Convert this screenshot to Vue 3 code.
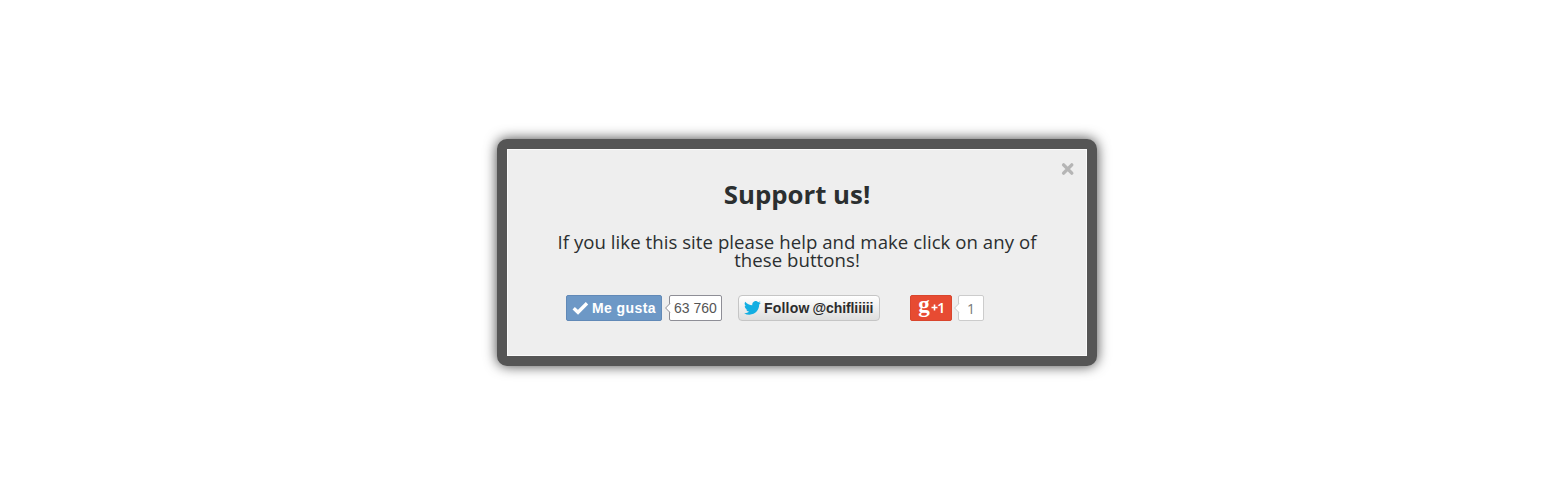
<script setup>
const heading = 'Support us!'
const lines = ['If you like this site please help and make click on any of', 'these buttons!']
const handle = '@chifl' + 'i'.repeat(5)
</script>

<template>
  <main class="page">
    <section class="dialog">
      <button class="close" aria-label="Close">
        <svg width="14" height="14" viewBox="0 0 14 14"><path d="M2.6 2.9 10.8 11.1M10.8 2.9 2.6 11.1" /></svg>
      </button>
      <h1>{{ heading }}</h1>
      <p><span v-for="line in lines" :key="line">{{ line }}</span></p>
      <div class="buttons">
        <button class="like">
          <svg width="17" height="14" viewBox="0 0 17 14"><path d="M1.7 7.3 6 11.3 15 2.2" /></svg>
          <span>Me gusta</span>
        </button>
        <div class="count like-count">
          <svg class="tip" width="5" height="10" viewBox="0 0 5 10"><path d="M5 .5.6 5 5 9.5" /></svg>
          <span>63 760</span>
        </div>
        <button class="follow">
          <svg width="17" height="14" viewBox="0 0 24 20"><path d="M23.95 2.37a9.8 9.8 0 0 1-2.82.77A4.93 4.93 0 0 0 23.3.42a9.9 9.9 0 0 1-3.13 1.2 4.92 4.92 0 0 0-8.39 4.48A13.97 13.97 0 0 1 1.64.96a4.92 4.92 0 0 0 1.52 6.57 4.9 4.9 0 0 1-2.23-.62v.06a4.92 4.92 0 0 0 3.95 4.83 5 5 0 0 1-2.22.08 4.93 4.93 0 0 0 4.6 3.42A9.87 9.87 0 0 1 0 17.34a13.94 13.94 0 0 0 7.55 2.21c9.14 0 14.31-7.72 13.99-14.64a10 10 0 0 0 2.41-2.54Z" /></svg>
          <span>Follow</span><span class="handle">{{ handle }}</span>
        </button>
        <button class="plus">
          <span class="g">g</span>
          <svg width="7" height="7" viewBox="0 0 7 7"><path d="M3.5 .5V6.5M.5 3.5H6.5" /></svg>
          <span class="one">1</span>
        </button>
        <div class="count plus-count">
          <svg class="tip" width="5" height="10" viewBox="0 0 5 10"><path d="M5 .5.6 5 5 9.5" /></svg>
          <span>1</span>
        </div>
      </div>
    </section>
  </main>
</template>

<style>
body { margin: 0; background: #fff; }
</style>

<style scoped>
.page { height: 500px; box-sizing: border-box; padding: 139px 0 0 497px; overflow: hidden; }
.dialog {
  position: relative;
  width: 600px;
  height: 227px;
  box-sizing: border-box;
  border: 10px solid #555;
  border-radius: 10px;
  background: #eee;
  box-shadow: 0 0 13px rgba(0, 0, 0, .75), inset 0 0 0 1px #fafafa;
  color: #2b2f30;
  font-family: "Open Sans", sans-serif;
}
button { margin: 0; padding: 0; border: 0; font: inherit; box-sizing: border-box; }
svg { display: block; flex: none; }
.close { position: absolute; top: 13px; right: 12px; background: none; }
.close path { fill: none; stroke: #b5b5b5; stroke-width: 3.4; stroke-linecap: round; }
h1 { margin: 0; padding-top: 27px; font-size: 25.8px; line-height: 36px; font-weight: 700; text-align: center; white-space: nowrap; }
p { margin: 21px 0 0; font-size: 18.6px; line-height: 18px; letter-spacing: .05px; }
p span { display: block; text-align: center; white-space: nowrap; }
.buttons { display: flex; height: 26px; margin: 26px 0 0 59px; font-family: "Liberation Sans", Arial, sans-serif; }
.buttons button, .count { height: 26px; display: flex; align-items: center; flex: none; white-space: nowrap; }
.buttons .like { width: 96px; padding-left: 5px; gap: 3px; border: 1px solid #6189b7; border-radius: 2px; background: #6d98c6; color: #fff; font: 700 14px "Liberation Sans", Arial, sans-serif; letter-spacing: .4px; }
.like path { fill: none; stroke: #fff; stroke-width: 3.4; }
.count { position: relative; box-sizing: border-box; justify-content: center; background: #fff; border: 1px solid #8e8e96; border-radius: 2px; color: #555; }
.tip { position: absolute; right: 100%; top: 7px; overflow: visible; }
.tip path { fill: #fff; stroke: #8e8e96; stroke-width: 1; }
.like-count { width: 53px; margin-left: 7px; font-size: 14px; }
.buttons .follow { width: 142px; margin-left: 16px; padding-left: 5px; gap: 3px; border: 1px solid #c5c5c5; border-radius: 4px; background: linear-gradient(#fff, #dedede); color: #2c2c2c; font: 700 14px "Liberation Sans", Arial, sans-serif; letter-spacing: .2px; }
.handle { letter-spacing: -.1px; }
.follow path { fill: #12aee2; }
.buttons .plus { width: 42px; margin-left: 30px; padding-left: 7px; border: 1px solid #d9452d; border-radius: 2px; background: #e74b32; color: #fff; }
.g { width: 12px; margin-top: -6px; font: 700 23px/26px "Liberation Serif", serif; }
.plus svg { margin: -1px 0 0 1px; }
.plus path { fill: none; stroke: #fff; stroke-width: 1.6; }
.one { margin: -2px 0 0 -1px; font: 600 15px/24px "Open Sans", sans-serif; }
.plus-count { width: 26px; margin-left: 6px; border-color: #ccc; color: #777; font: 14px "Open Sans", sans-serif; }
.plus-count .tip path { stroke: #ccc; }
</style>
